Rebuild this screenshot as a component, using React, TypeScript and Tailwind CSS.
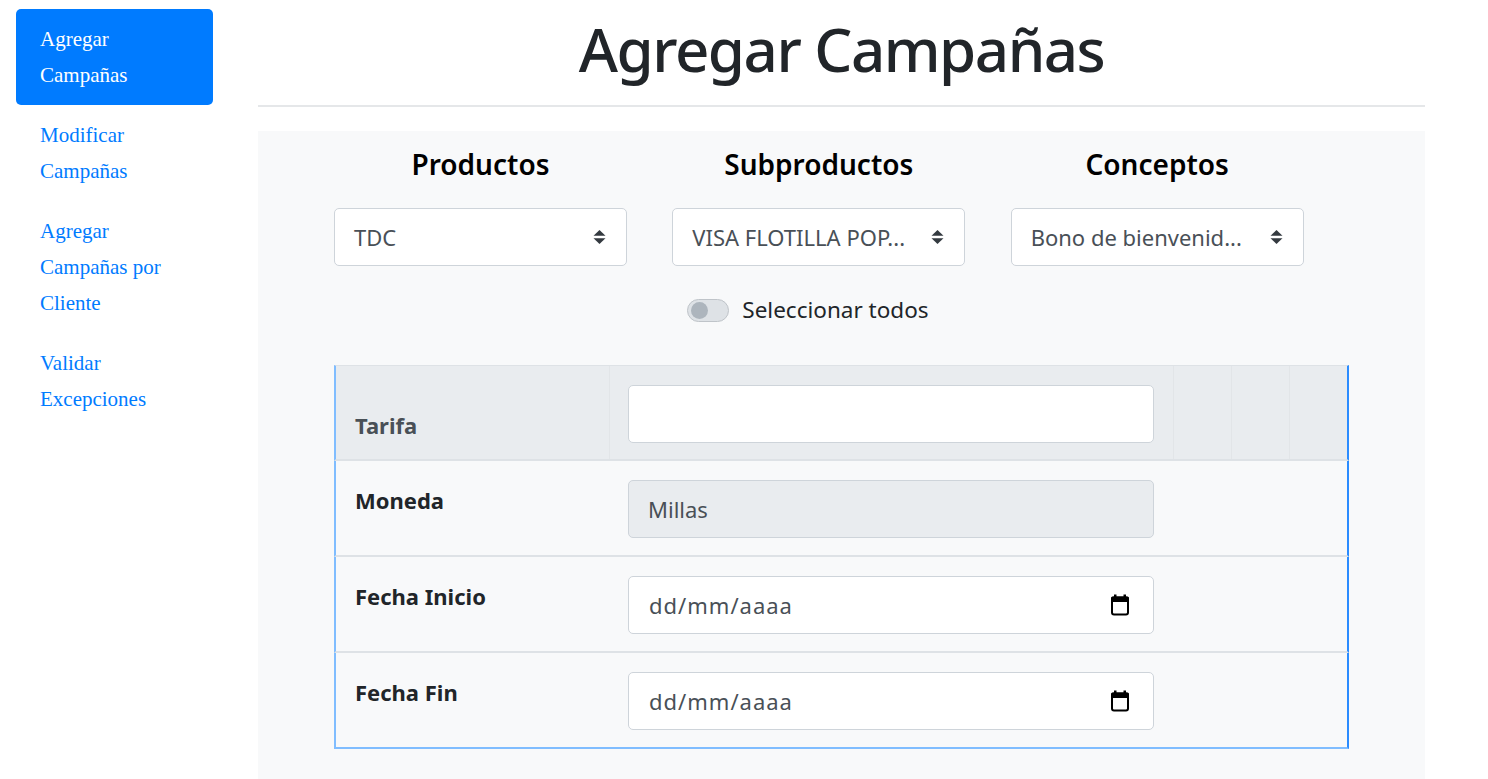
import { ReactNode } from 'react'

const NAV = [
  { label: ['Agregar', 'Campañas'], active: true },
  { label: ['Modificar', 'Campañas'], active: false },
  { label: ['Agregar', 'Campañas por', 'Cliente'], active: false },
  { label: ['Validar', 'Excepciones'], active: false },
]

const SELECTS = [
  { title: 'Productos', value: 'TDC' },
  { title: 'Subproductos', value: 'VISA FLOTILLA POP...' },
  { title: 'Conceptos', value: 'Bono de bienvenid...' },
]

function SortArrows() {
  return (
    <svg width="13" height="16" viewBox="0 0 13 16" className="shrink-0">
      <path d="M0.5 6.8 L6.5 1 L12.5 6.8 Z" fill="#343a40" />
      <path d="M0.5 9.2 L6.5 15 L12.5 9.2 Z" fill="#343a40" />
    </svg>
  )
}

function CalendarIcon() {
  return (
    <svg width="20" height="22" viewBox="0 0 20 22" className="shrink-0">
      <rect x="4" y="0.5" width="2.5" height="3.5" fill="#000" />
      <rect x="13.5" y="0.5" width="2.5" height="3.5" fill="#000" />
      <rect x="1" y="2.5" width="18" height="5.5" rx="1.5" fill="#000" />
      <rect x="2" y="3.5" width="16" height="17" rx="2" fill="none" stroke="#000" strokeWidth="2" />
    </svg>
  )
}

function Row({ label, header, children, last }: { label: string; header?: boolean; children: ReactNode; last?: boolean }) {
  return (
    <div
      className={`flex h-[96px] border-l-2 border-r-2 border-l-[#80bdff] border-r-[#2b8cff] ${
        header ? 'bg-[#e9ecef] border-t border-t-[#dee2e6]' : 'bg-[#f8f9fa]'
      } ${last ? 'border-b-2 border-b-[#80bdff]' : 'border-b-2 border-b-[#dee2e6]'}`}
    >
      <div
        className={`w-[274px] px-[19px] flex ${
          header ? 'items-end pb-[17px] text-[#495057] border-r border-r-[#e2e5e8]' : 'items-start pt-[22px] text-[#212529]'
        } text-[22px] font-bold leading-[34px]`}
      >
        {label}
      </div>
      <div className={`w-[564px] pl-[18px] pt-[19px] ${header ? 'border-r border-r-[#e2e5e8]' : ''}`}>{children}</div>
      <div className={`w-[58px] ${header ? 'border-r border-r-[#e2e5e8]' : ''}`} />
      <div className={`w-[58px] ${header ? 'border-r border-r-[#e2e5e8]' : ''}`} />
      <div className="flex-1" />
    </div>
  )
}

export default function App() {
  return (
    <div className="flex min-h-[779px] bg-white text-[#212529]" style={{ fontFamily: '"Noto Sans", sans-serif' }}>
      {/* sidebar */}
      <nav className="w-[258px] shrink-0 pl-[16px] pr-[45px] pt-[9px]" style={{ fontFamily: '"Liberation Serif", serif' }}>
        {NAV.map((n, i) => (
          <div
            key={i}
            className={`px-[24px] py-[12px] rounded-[5px] text-[21px] leading-[36px] ${
              n.active ? 'bg-[#007bff] text-white' : 'text-[#007bff]'
            }`}
          >
            {n.label.map((l, j) => (
              <div key={j}>{l}</div>
            ))}
          </div>
        ))}
      </nav>

      {/* main */}
      <main className="w-[1167px] shrink-0">
        <div className="h-[107px] border-b-2 border-[#e5e7e9] flex items-center justify-center">
          <h1 className="text-[60px] font-medium leading-none tracking-[-1.5px] text-[#212529] -mt-[8px]">Agregar Campañas</h1>
        </div>

        <section className="mt-[24px] bg-[#f8f9fa] px-[76px] pb-[40px]">
          <div className="grid grid-cols-3 pt-[13px]">
            {SELECTS.map(s => (
              <div key={s.title}>
                <div className="w-[293px]">
                  <h2 className="text-center text-[28px] font-semibold leading-[40px] text-black">{s.title}</h2>
                  <div className="mt-[24px] h-[58px] bg-white border border-[#ced4da] rounded-[5px] flex items-center justify-between pl-[19px] pr-[20px]">
                    <span className="text-[22px] text-[#495057] whitespace-nowrap">{s.value}</span>
                    <SortArrows />
                  </div>
                </div>
              </div>
            ))}
          </div>

          <div className="grid grid-cols-3 mt-[29px]">
            <div />
            <div className="flex items-center pl-[15px]">
              <div className="w-[42px] h-[23px] rounded-full border border-[#bfc4c9] bg-[#dee2e6] flex items-center pl-[3px]">
                <div className="w-[17px] h-[17px] rounded-full bg-[#adb5bd]" />
              </div>
              <span className="ml-[13px] text-[22.5px] leading-[30px] text-[#212529]">Seleccionar todos</span>
            </div>
            <div />
          </div>

          <div className="mt-[40px]">
            <Row label="Tarifa" header>
              <div className="w-[526px] h-[58px] bg-white border border-[#ced4da] rounded-[5px]" />
            </Row>
            <Row label="Moneda">
              <div className="w-[526px] h-[58px] bg-[#e9ecef] border border-[#ced4da] rounded-[5px] flex items-center pl-[19px] text-[22px] text-[#495057]">
                Millas
              </div>
            </Row>
            <Row label="Fecha Inicio">
              <div className="w-[526px] h-[58px] bg-white border border-[#ced4da] rounded-[5px] flex items-center justify-between pl-[20px] pr-[23px] text-[22px] tracking-[1px] text-[#495057]">
                <span>dd/mm/aaaa</span>
                <CalendarIcon />
              </div>
            </Row>
            <Row label="Fecha Fin" last>
              <div className="w-[526px] h-[58px] bg-white border border-[#ced4da] rounded-[5px] flex items-center justify-between pl-[20px] pr-[23px] text-[22px] tracking-[1px] text-[#495057]">
                <span>dd/mm/aaaa</span>
                <CalendarIcon />
              </div>
            </Row>
          </div>
        </section>
      </main>
    </div>
  )
}
